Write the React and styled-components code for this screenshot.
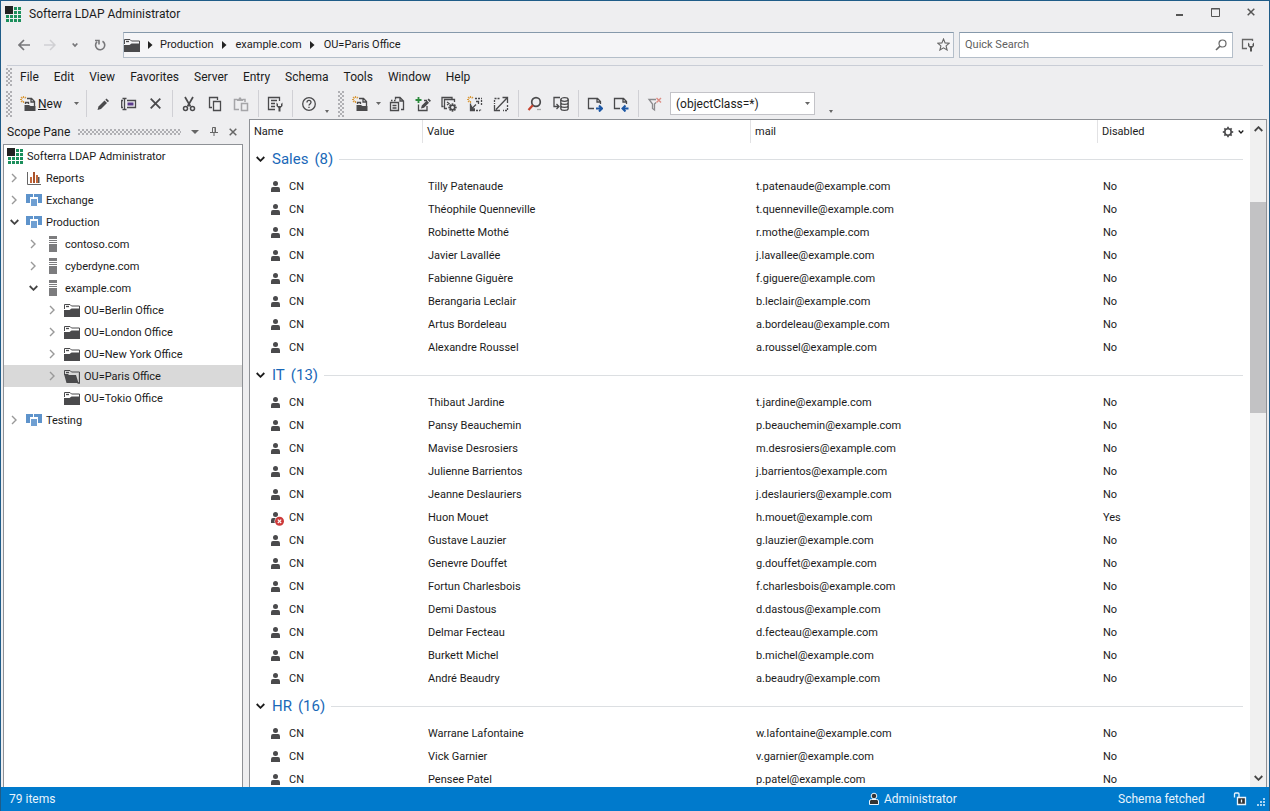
import React from "react";
import styled, { createGlobalStyle, css } from "styled-components";

const listFont = css`
  font-family: Roboto, "Noto Sans", sans-serif;
  font-size: 11px;
`;
const uiFont = css`
  font-family: Roboto, "Noto Sans", sans-serif;
  font-size: 12px;
`;

const Global = createGlobalStyle`
  * { box-sizing: border-box; }
  body { margin: 0; background: #eeeef0; color: #1b1b1b; }
  button { border: 0; padding: 0; background: none; color: inherit; font: inherit; }
  svg { display: block; flex: none; }
`;

const dots = css`
  background-image: radial-gradient(circle at 1px 1px, #b0b0b4 0 1px, transparent 1px),
    radial-gradient(circle at 3px 3px, #b0b0b4 0 1px, transparent 1px);
  background-size: 4px 4px;
`;

const Window = styled.div`
  ${uiFont}
  display: flex;
  flex-direction: column;
  height: 100vh;
  overflow: hidden;
  border: 1px solid #1f5c88;
  border-bottom: 0;
`;
const TitleBar = styled.header`
  display: flex;
  align-items: center;
  height: 26px;
  flex: none;
  padding-left: 4px;
`;
const Title = styled.h1`
  margin: 0 auto 0 8px;
  font-size: 12px;
  font-weight: 400;
`;
const WindowButton = styled.button`
  display: grid;
  place-items: center;
  width: 36px;
  height: 22px;
  margin-bottom: 4px;
  color: #555;
`;
const NavBar = styled.div`
  display: flex;
  align-items: center;
  flex: none;
  height: 39px;
  margin: 0 6px;
  padding: 0 0 3px 4px;
  border-bottom: 1px solid #c9cdd6;
`;
const NavButton = styled.button`
  display: grid;
  place-items: center;
  width: ${(p) => (p.$narrow ? 24 : 26)}px;
  height: 26px;
  color: ${(p) => (p.$dim ? "#d0d0d3" : "#77777a")};
`;
const AddressBar = styled.nav`
  ${listFont}
  display: flex;
  align-items: center;
  flex: 1;
  height: 26px;
  margin: 0 5px 0 10px;
  border: 1px solid #b4bec9;
  border-top-color: #8699ab;
  background: #f5f5f7;
`;
const Crumb = styled.a`
  color: #1b1b1b;
  text-decoration: none;
  white-space: nowrap;
`;
const CrumbArrow = styled.span`
  display: grid;
  place-items: center;
  width: ${(p) => (p.$first ? 20 : 22)}px;
`;
const FavoriteButton = styled.button`
  margin-left: auto;
  padding-right: 3px;
`;
const SearchBox = styled.div`
  display: flex;
  align-items: center;
  width: 274px;
  height: 26px;
  border: 1px solid #b4bec9;
  border-top-color: #8699ab;
  background: #fff;
  padding: 0 5px;
`;
const SearchInput = styled.input`
  ${listFont}
  flex: 1;
  min-width: 0;
  padding: 0;
  border: 0;
  outline: 0;
  background: none;
  &::placeholder { color: #606060; opacity: 1; }
`;
const SearchOptions = styled.button`
  padding: 0 8px;
`;
const MenuBar = styled.nav`
  display: flex;
  align-items: center;
  flex: none;
  height: 22px;
  padding-left: 5px;
`;
const MenuList = styled.div`
  display: flex;
  gap: 15px;
  margin-left: 8px;
`;
const Grip = styled.span`
  ${dots}
  flex: none;
  width: 6px;
  height: ${(p) => p.$h}px;
  margin-right: ${(p) => p.$gap || 0}px;
`;
const Toolbar = styled.div`
  display: flex;
  align-items: center;
  flex: none;
  height: 31px;
  padding-left: 5px;
`;
const ToolButton = styled.button`
  display: grid;
  place-items: center;
  flex: none;
  width: 26px;
  height: 26px;
`;
const NewButton = styled.button`
  display: flex;
  align-items: center;
  gap: 2px;
  flex: none;
  width: 54px;
  height: 26px;
  margin-left: 5px;
  padding-left: 3px;
`;
const DropButton = styled.button`
  display: grid;
  place-items: center;
  flex: none;
  width: 11px;
  height: 26px;
`;
const Overflow = styled.button`
  display: grid;
  place-items: end center;
  flex: none;
  width: 10px;
  height: 16px;
  margin: 2px 6px 0 0;
`;
const Separator = styled.span`
  flex: none;
  width: 1px;
  height: 27px;
  margin: 0 3px 0 4px;
  background: #d0d0d5;
`;
const FilterBox = styled.div`
  display: grid;
  align-items: center;
  width: 145px;
  height: 23px;
  margin: 0 11px 0 2px;
  background: #fff;
  border: 1px solid #c3c3c8;
  & > * { grid-area: 1 / 1; }
  & > svg { justify-self: end; margin-right: 4px; pointer-events: none; }
`;
const FilterSelect = styled.select`
  ${uiFont}
  appearance: none;
  width: 100%;
  height: 100%;
  padding: 0 0 0 5px;
  border: 0;
  background: none;
  color: #1b1b1b;
`;
const Main = styled.main`
  display: flex;
  flex: 1;
  min-height: 0;
  padding: 0 2px;
`;
const ScopePane = styled.aside`
  display: flex;
  flex-direction: column;
  width: 240px;
  flex: none;
  margin-right: 6px;
`;
const PaneHeader = styled.div`
  display: flex;
  align-items: center;
  height: 25px;
  flex: none;
  padding: 0 1px 0 4px;
`;
const PaneTitle = styled.h2`
  margin: 0;
  font-size: 12px;
  font-weight: 400;
`;
const PaneDots = styled.span`
  ${dots}
  flex: 1;
  height: 6px;
  margin: 0 4px 0 8px;
`;
const PaneButton = styled.button`
  display: grid;
  place-items: center;
  width: 19px;
  height: 19px;
  color: #666;
`;
const Tree = styled.ul`
  ${listFont}
  flex: 1;
  margin: 0;
  padding: 0;
  list-style: none;
  background: #fff;
  border: 1px solid #8e9196;
  border-bottom: 0;
`;
const TreeRow = styled.li`
  display: flex;
  align-items: center;
  height: 22px;
  padding-left: ${(p) => (p.$level ? (p.$level - 1) * 19 : 3)}px;
  background: ${(p) => (p.$selected ? "#d9d9d9" : "none")};
  white-space: nowrap;
`;
const Twisty = styled.span`
  display: grid;
  place-items: center;
  width: 20px;
  margin-right: 2px;
  color: ${(p) => (p.$open ? "#444" : "#999")};
`;
const TreeLabel = styled.span`
  margin-left: 4px;
`;
const ListPane = styled.section`
  display: flex;
  flex: 1;
  min-width: 0;
  overflow: hidden;
  border: 1px solid #8e9196;
  border-bottom: 0;
  background: #fff;
`;
const TableArea = styled.div`
  flex: 1;
  min-width: 0;
  overflow: hidden;
`;
const Table = styled.table`
  ${listFont}
  width: 100%;
  table-layout: fixed;
  border-collapse: separate;
  border-spacing: 0;
`;
const HeadCell = styled.th`
  width: ${(p) => p.$w};
  height: 23px;
  padding: 0 0 0 4px;
  font-weight: 400;
  text-align: left;
  border-right: ${(p) => (p.$last ? "0" : "1px solid #e2e2e4")};
`;
const HeadFlex = styled.div`
  display: flex;
  align-items: center;
  justify-content: space-between;
  padding-right: 6px;
`;
const GearButton = styled.button`
  display: flex;
  align-items: center;
  gap: 4px;
`;
const GroupCell = styled.th`
  height: 32px;
  padding: 0 7px 0 6px;
  font-weight: 400;
`;
const GroupFlex = styled.div`
  display: flex;
  align-items: center;
  &::after {
    content: "";
    flex: 1;
    height: 1px;
    margin-left: 6px;
    background: #dcdfe2;
  }
`;
const GroupTitle = styled.span`
  display: flex;
  gap: 6px;
  margin-left: 7px;
  font-size: 15px;
  line-height: 20px;
  color: #1a68b8;
`;
const Cell = styled.td`
  height: 23px;
  padding: 0 0 0 ${(p) => (p.$name ? 19 : 5)}px;
  white-space: nowrap;
`;
const NameFlex = styled.div`
  display: flex;
  align-items: center;
  gap: 4px;
`;
const ScrollBar = styled.div`
  display: flex;
  flex-direction: column;
  width: 16px;
  flex: none;
  background: #f0f0f0;
`;
const ScrollButton = styled.button`
  display: grid;
  place-items: center;
  height: 18px;
  color: #444;
`;
const ScrollTrack = styled.div`
  flex: 1;
  display: grid;
  grid-template-rows: 64fr 211fr 356fr;
`;
const ScrollThumb = styled.div`
  grid-row: 2;
  background: #c2c2c4;
`;
const StatusBar = styled.footer`
  display: flex;
  align-items: center;
  flex: none;
  height: 24px;
  margin: 0 -1px;
  padding: 0 5px 0 9px;
  background: #007acc;
  color: #e8f4fd;
`;
const StatusItem = styled.span`
  display: flex;
  align-items: center;
  gap: 4px;
  width: ${(p) => p.$w}px;
`;
const StatusCount = styled.span`
  margin-right: auto;
`;
const StatusGrip = styled.span`
  margin: 6px 0 0 10px;
`;

const Svg = ({ w = 16, h = 16, children, ...rest }) => (
  <svg width={w} height={h} viewBox={`0 0 ${w} ${h}`} fill="none" stroke="#4a4a4c" strokeWidth="1.3" aria-hidden="true" {...rest}>
    {children}
  </svg>
);

const Logo = () => (
  <Svg stroke="none">
    {[0, 1, 2, 3].map((r) =>
      [0, 1, 2, 3].map((c) =>
        r < 2 && c < 2 ? null : <rect key={`${r}${c}`} x={c * 4 + 1} y={r * 4 + 1} width="3" height="3" fill="#1c8f5c" />
      )
    )}
    <path d="M0 0h8v8H0z" fill="#222" />
  </Svg>
);
const Folder = ({ open }) => (
  <Svg stroke="none">
    <path d="M.5 7V2.500H6l1.500 1.500h8V7" stroke="#4a4a4c" strokeWidth="1" />
    <path d="M2 4.500h3" stroke="#4a4a4c" />
    {open ? (
      <>
        <path d="M0 6h4l1 1h7l2.500 8H2.500z" fill="#4a4a4c" />
        <path d="M15.500 5v10h-2" stroke="#4a4a4c" />
      </>
    ) : (
      <path d="M0 8h5.500l2-1.500H16V15H0z" fill="#4a4a4c" />
    )}
  </Svg>
);
const Report = () => (
  <Svg stroke="none">
    <path d="M1.500 2v12.500H15" stroke="#666" strokeWidth="1" />
    <path d="M4 7h2v6H4zM10 5h2v8h-2z" fill="#c4683a" />
    <path d="M7 2h2v11H7z" fill="#a8522c" />
    <path d="M12 7h1.500v6H12z" fill="#555" />
  </Svg>
);
const Realm = () => (
  <Svg stroke="none">
    <path d="M0 2h7v3H4v6H0zM8 2h8v9h-4V5H8z" fill="#5e93cb" />
    <path d="M4.500 6.500h7v8h-7z" fill="#6f9fd2" stroke="#fff" strokeWidth="1" />
  </Svg>
);
const Server = () => (
  <Svg stroke="none">
    <path d="M4 0h8v3H4zM4 4h8v1H4zM4 6h8v1H4zM4 8h8v8H4z" fill="#7c7c7e" />
  </Svg>
);
const Person = ({ disabled }) => (
  <Svg stroke="none">
    <circle cx="6.500" cy="4.500" r="2.500" fill="#4a4a4c" />
    <path d="M2 13v-2.800Q2 8 4 8h5q2 0 2 2.200V13z" fill="#4a4a4c" />
    {disabled && (
      <>
        <circle cx="10.500" cy="11.300" r="5" fill="#fff" />
        <circle cx="10.500" cy="11.300" r="4.500" fill="#cc3a3a" />
        <path d="M8.800 9.600l3.400 3.400m0-3.400l-3.400 3.400" stroke="#fff" strokeWidth="1.200" />
      </>
    )}
  </Svg>
);
const Caret = ({ w = 5 }) => (
  <Svg w={w} h={3} stroke="none"><path d={`M0 0h${w}l-${w / 2} 3z`} fill="#666" /></Svg>
);
const ChevDown = ({ w = 9, sw = 1.8 }) => (
  <Svg w={w} h={6} stroke="currentColor" strokeWidth={sw}>
    <path d={w > 6 ? "M.7 1l3.800 3.800L8.300 1" : "M.7 1.500L3 4l2.300-2.500"} />
  </Svg>
);
const ChevRight = () => (
  <Svg w={6} h={10} stroke="currentColor" strokeWidth="1.400"><path d="M1 1l4 4-4 4" /></Svg>
);
const Play = () => (
  <Svg w={5} h={8} stroke="none"><path d="M0 0l4.500 4L0 8z" fill="#222" /></Svg>
);
const Cross = ({ s = 9, sw = 1.5, c = "currentColor" }) => (
  <Svg w={s} h={s} stroke={c} strokeWidth={sw}><path d={`M.7 .7L${s - 0.7} ${s - 0.7}M${s - 0.7} .7L.7 ${s - 0.7}`} /></Svg>
);
const Spark = () => <path d="M3.500 0v2M3.500 5v2M0 3.500h2M1 1l1.500 1.500M6 1L4.700 2.300M1 6l1.500-1.500" stroke="#d99a3d" strokeWidth="1.200" />;
const NewEntry = () => (
  <Svg>
    <Spark />
    <path d="M7 2.500h4.500l3 3V10M11 2.500V6h3.500M5.500 8V6.500h3V8" />
    <path d="M4.500 9h4.500l1.500 1H15.500v5h-11z" fill="#4a4a4c" stroke="none" />
  </Svg>
);
const Pencil = () => (
  <Svg stroke="none">
    <path d="M2.500 14l1-3.500 6-6 2.500 2.500-6 6z" fill="#4a4a4c" />
    <path d="M10.300 3.700l1.200-1.200L14 5l-1.200 1.200z" fill="#4a4a4c" />
  </Svg>
);
const Rename = () => (
  <Svg>
    <path d="M1.500 2.500h4M3.500 2.500v11M1.500 13.500h4M6 4.500h8.500v7H6" />
    <path d="M6.500 6.500h6v3h-6z" fill="#5a3a8c" stroke="none" />
    <path d="M2 4.500H.7v7H2" />
  </Svg>
);
const Cut = () => (
  <Svg>
    <path d="M4 1l5.500 9.500M12 1L6.500 10.500" strokeWidth="1.700" />
    <circle cx="4.500" cy="12.500" r="2" strokeWidth="1.500" />
    <circle cx="11.500" cy="12.500" r="2" strokeWidth="1.500" />
  </Svg>
);
const Copy = () => (
  <Svg><path d="M5 11.500H2.500v-10h8V4M6.500 5.500h7v9h-7z" /></Svg>
);
const Paste = () => (
  <Svg stroke="#a5a5a8">
    <path d="M6 13.500H1.500V3.500h3M9.500 3.500H12V6M8.500 7.500h6v7h-6z" strokeWidth="1.500" />
    <path d="M4 5V3h1.500l.5-1.500h2L8.500 3H10v2z" fill="#a5a5a8" stroke="none" />
  </Svg>
);
const WrenchMark = ({ x = 0, y = 0, c = "#4a4a4c" }) => (
  <path transform={`translate(${x} ${y})`} d="M0 0v3.500l2 2V9h2V5.500l2-2V0L4.500 1.500v2h-3v-2z" fill={c} stroke="none" />
);
const Properties = () => (
  <Svg>
    <path d="M8 13.500H1.500v-12h11V5M4 4.500h6M4 7.500h4M4 10.500h4" />
    <WrenchMark x={9.5} y={6.5} />
  </Svg>
);
const Help = () => (
  <Svg>
    <circle cx="8" cy="8" r="6.300" />
    <path d="M6 6.500c0-2.800 4-2.600 4-.2C10 8 8 7.800 8 9.600M8 10.700v1.400" />
  </Svg>
);
const NewLdif = () => (
  <Svg>
    <path d="M6.500 3.500v-2H11l3.500 3.500v8.500H12M11 1.500V5h3.500" />
    <path d="M1.500 6.500h8v8h-8zM3.500 9.500h4M3.500 12h4M2 4.500h1.500M5 4.500h1.500" />
  </Svg>
);
const AddEdit = () => (
  <Svg>
    <path d="M3.500 8.500v6H12V10M9 4.500h3" />
    <path d="M3.500 1v6M.5 4h6" stroke="#2c8a3c" strokeWidth="1.800" />
    <path d="M6 12.500l.8-3 5-5 2.200 2.200-5 5zM12.500 3.800l1.200-1.200L16 4.800 14.700 6z" fill="#4a4a4c" stroke="none" />
  </Svg>
);
const GearMark = ({ x, y, r }) => (
  <>
    <circle cx={x} cy={y} r={r} strokeWidth="1.600" />
    {[0, 45, 90, 135, 180, 225, 270, 315].map((a) => (
      <path key={a} d={`M${x} ${y - r}v-2`} strokeWidth="1.700" transform={`rotate(${a} ${x} ${y})`} />
    ))}
  </>
);
const BatchGear = () => (
  <Svg>
    <path d="M2.500 10.500H1v-9h10V3M6 12.500H3.500v-9h10V6M6 6l2 1.500L6 9" />
    <GearMark x={11.5} y={11.5} r={2.2} />
  </Svg>
);
const ImportBox = () => (
  <Svg>
    <path d="M8 2.500h7M14.500 4v6M13.500 13.500v1M9 14.500h4" strokeDasharray="2 1" />
    <path d="M3.500 7.500v7H8M4.500 9.500V13H8M5 12.500l4-4M9 5.500h2.500V8" />
    <Spark />
  </Svg>
);
const ExportBox = () => (
  <Svg>
    <path d="M1.500 2.500h5M1.500 4v4M14.500 9v5.500H10" strokeDasharray="2 1" />
    <path d="M9.500 1.500h5V7M14 2L3 13.500M1.500 9v5.500H7" />
  </Svg>
);
const Find = () => (
  <Svg>
    <circle cx="9" cy="6" r="4.300" strokeWidth="1.700" />
    <path d="M5.800 9.200L1.500 14" stroke="#c8432e" strokeWidth="2.200" />
    <path d="M10 13.500h4" stroke="#aaa" />
  </Svg>
);
const DbImport = () => (
  <Svg>
    <path d="M7 1.500H1v9h5M3.500 8L6 10.500 3.500 13" />
    <ellipse cx="11.500" cy="3.500" rx="3.700" ry="1.800" />
    <path d="M7.800 3.500v9c0 2.500 7.400 2.500 7.400 0v-9M7.800 6.500c0 2.500 7.400 2.500 7.400 0M7.800 9.500c0 2.500 7.400 2.500 7.400 0" />
  </Svg>
);
const PageArrow = ({ left }) => (
  <Svg>
    <path d="M7 12.500H1.500v-10h9l3 3V8M10 2.500V6h3.500" />
    {left ? (
      <path d="M15.500 12.500H10M12.500 9.500l-3 3 3 3" stroke="#1c57a5" strokeWidth="2" />
    ) : (
      <path d="M9 12.500h5.500M12 9.500l3 3-3 3" stroke="#1c57a5" strokeWidth="2" />
    )}
  </Svg>
);
const Funnel = () => (
  <Svg stroke="#8a8a8d">
    <path d="M9 3.500H2L5.500 8v4.500l2 1.500V8L9 6.500" />
    <path d="M9.500 2L14 6.500M14 2L9.500 6.500" stroke="#dc8c84" strokeWidth="1.400" />
  </Svg>
);
const Gear = () => (
  <Svg w={12} h={12}><GearMark x={6} y={6} r={3.2} /></Svg>
);
const Star = () => (
  <Svg w={13} h={13} stroke="#666" strokeWidth="1.100"><path d="M6.500 1l1.600 3.900 4.200.3-3.200 2.700 1 4.100-3.600-2.200L2.900 12l1-4.100L.7 5.200l4.200-.3z" /></Svg>
);
const Magnifier = () => (
  <Svg w={12} h={12} stroke="#666" strokeWidth="1.200"><circle cx="7.500" cy="4.500" r="3.500" /><path d="M5 7.200L1 11" strokeWidth="1.600" /></Svg>
);
const Tune = () => (
  <Svg w={14} h={16} stroke="#666"><path d="M6 11.500H1.500v-9h10V4" /><WrenchMark x={7} y={5.5} c="#555" /></Svg>
);

const menus = ["File", "Edit", "View", "Favorites", "Server", "Entry", "Schema", "Tools", "Window", "Help"];

const tree = [
  { label: "Softerra LDAP Administrator", level: 0, icon: <Logo /> },
  { label: "Reports", level: 1, icon: <Report />, state: "closed" },
  { label: "Exchange", level: 1, icon: <Realm />, state: "closed" },
  { label: "Production", level: 1, icon: <Realm />, state: "open" },
  { label: "contoso.com", level: 2, icon: <Server />, state: "closed" },
  { label: "cyberdyne.com", level: 2, icon: <Server />, state: "closed" },
  { label: "example.com", level: 2, icon: <Server />, state: "open" },
  { label: "OU=Berlin Office", level: 3, icon: <Folder />, state: "closed" },
  { label: "OU=London Office", level: 3, icon: <Folder />, state: "closed" },
  { label: "OU=New York Office", level: 3, icon: <Folder />, state: "closed" },
  { label: "OU=Paris Office", level: 3, icon: <Folder open />, state: "closed", selected: true },
  { label: "OU=Tokio Office", level: 3, icon: <Folder />, state: "leaf" },
  { label: "Testing", level: 1, icon: <Realm />, state: "closed" },
];

const groups = [
  {
    title: "Sales",
    count: 8,
    rows: [
      ["Tilly Patenaude", "t.patenaude"],
      ["Théophile Quenneville", "t.quenneville"],
      ["Robinette Mothé", "r.mothe"],
      ["Javier Lavallée", "j.lavallee"],
      ["Fabienne Giguère", "f.giguere"],
      ["Berangaria Leclair", "b.leclair"],
      ["Artus Bordeleau", "a.bordeleau"],
      ["Alexandre Roussel", "a.roussel"],
    ],
  },
  {
    title: "IT",
    count: 13,
    rows: [
      ["Thibaut Jardine", "t.jardine"],
      ["Pansy Beauchemin", "p.beauchemin"],
      ["Mavise Desrosiers", "m.desrosiers"],
      ["Julienne Barrientos", "j.barrientos"],
      ["Jeanne Deslauriers", "j.deslauriers"],
      ["Huon Mouet", "h.mouet", true],
      ["Gustave Lauzier", "g.lauzier"],
      ["Genevre Douffet", "g.douffet"],
      ["Fortun Charlesbois", "f.charlesbois"],
      ["Demi Dastous", "d.dastous"],
      ["Delmar Fecteau", "d.fecteau"],
      ["Burkett Michel", "b.michel"],
      ["André Beaudry", "a.beaudry"],
    ],
  },
  {
    title: "HR",
    count: 16,
    rows: [
      ["Warrane Lafontaine", "w.lafontaine"],
      ["Vick Garnier", "v.garnier"],
      ["Pensee Patel", "p.patel"],
    ],
  },
];

const Tool = ({ label, children }) => (
  <ToolButton type="button" aria-label={label}>{children}</ToolButton>
);

export default function App() {
  return (
    <>
      <Global />
      <Window>
        <TitleBar>
          <Logo />
          <Title>Softerra LDAP Administrator</Title>
          <WindowButton type="button" aria-label="Minimize"><Svg w={7} h={8} stroke="currentColor" strokeWidth="2"><path d="M0 7h7" /></Svg></WindowButton>
          <WindowButton type="button" aria-label="Maximize"><Svg w={9} h={9} stroke="currentColor" strokeWidth="1"><path d="M.5.5h8v8h-8zM0 1h9" /></Svg></WindowButton>
          <WindowButton type="button" aria-label="Close"><Cross s={8} /></WindowButton>
        </TitleBar>
        <NavBar>
          <NavButton type="button" aria-label="Back"><Svg w={12} h={12} stroke="currentColor" strokeWidth="1.700"><path d="M12 6H1M6 1L1 6l5 5" /></Svg></NavButton>
          <NavButton type="button" aria-label="Forward" $dim><Svg w={12} h={12} stroke="currentColor" strokeWidth="1.500"><path d="M0 6h11M6 1l5 5-5 5" /></Svg></NavButton>
          <NavButton type="button" aria-label="History" $narrow><ChevDown w={6} /></NavButton>
          <NavButton type="button" aria-label="Refresh"><Svg w={12} h={12} stroke="currentColor" strokeWidth="1.600"><path d="M8.500 2.200A4.600 4.600 0 1 1 3 2.800M5 5.500V1.500H1" /></Svg></NavButton>
          <AddressBar aria-label="Location">
            <Folder />
            <CrumbArrow $first><Play /></CrumbArrow>
            <Crumb href="#production">Production</Crumb>
            <CrumbArrow><Play /></CrumbArrow>
            <Crumb href="#example">example.com</Crumb>
            <CrumbArrow><Play /></CrumbArrow>
            <Crumb href="#paris">OU=Paris Office</Crumb>
            <FavoriteButton type="button" aria-label="Add to favorites"><Star /></FavoriteButton>
          </AddressBar>
          <SearchBox>
            <SearchInput type="search" placeholder="Quick Search" aria-label="Quick Search" />
            <Magnifier />
          </SearchBox>
          <SearchOptions type="button" aria-label="Search options"><Tune /></SearchOptions>
        </NavBar>
        <MenuBar aria-label="Main menu">
          <Grip $h={18} />
          <MenuList>
            {menus.map((m) => <button type="button" key={m}>{m}</button>)}
          </MenuList>
        </MenuBar>
        <Toolbar role="toolbar" aria-label="Standard">
          <Grip $h={26} />
          <NewButton type="button"><NewEntry /><span><u>N</u>ew</span></NewButton>
          <DropButton type="button" aria-label="New options"><Caret /></DropButton>
          <Separator />
          <Tool label="Edit"><Pencil /></Tool>
          <Tool label="Rename"><Rename /></Tool>
          <Tool label="Delete"><Cross s={11} sw={1.8} c="#4a4a4c" /></Tool>
          <Separator />
          <Tool label="Cut"><Cut /></Tool>
          <Tool label="Copy"><Copy /></Tool>
          <Tool label="Paste"><Paste /></Tool>
          <Separator />
          <Tool label="Properties"><Properties /></Tool>
          <Separator />
          <Tool label="Help"><Help /></Tool>
          <Overflow type="button" aria-label="More standard buttons"><Caret w={4} /></Overflow>
          <Grip $h={26} $gap={3} />
          <Tool label="New entry"><NewEntry /></Tool>
          <DropButton type="button" aria-label="New entry options"><Caret /></DropButton>
          <Tool label="New LDIF"><NewLdif /></Tool>
          <Tool label="Add value"><AddEdit /></Tool>
          <Tool label="Batch update"><BatchGear /></Tool>
          <Tool label="Import"><ImportBox /></Tool>
          <Tool label="Export"><ExportBox /></Tool>
          <Separator />
          <Tool label="Search"><Find /></Tool>
          <Tool label="Save to server"><DbImport /></Tool>
          <Separator />
          <Tool label="Next page"><PageArrow /></Tool>
          <Tool label="Previous page"><PageArrow left /></Tool>
          <Separator />
          <Tool label="Clear filter"><Funnel /></Tool>
          <FilterBox>
            <FilterSelect aria-label="Filter" defaultValue="all">
              <option value="all">(objectClass=*)</option>
            </FilterSelect>
            <Caret />
          </FilterBox>
          <Overflow type="button" aria-label="More filter buttons"><Caret w={4} /></Overflow>
        </Toolbar>
        <Main>
          <ScopePane>
            <PaneHeader>
              <PaneTitle>Scope Pane</PaneTitle>
              <PaneDots />
              <PaneButton type="button" aria-label="Pane menu"><Svg w={8} h={4} stroke="none"><path d="M0 0h8L4 4z" fill="#666" /></Svg></PaneButton>
              <PaneButton type="button" aria-label="Pin"><Svg w={8} h={9} stroke="currentColor" strokeWidth="1"><path d="M2.500 5V.5h3V5M5 .5V5M0 5.500h8M4 6v3" /></Svg></PaneButton>
              <PaneButton type="button" aria-label="Close pane"><Cross s={8} /></PaneButton>
            </PaneHeader>
            <Tree>
              {tree.map((n) => (
                <TreeRow key={n.label} $level={n.level} $selected={n.selected}>
                  {n.level > 0 && (
                    <Twisty $open={n.state === "open"}>
                      {n.state === "open" && <ChevDown />}
                      {n.state === "closed" && <ChevRight />}
                    </Twisty>
                  )}
                  {n.icon}
                  <TreeLabel>{n.label}</TreeLabel>
                </TreeRow>
              ))}
            </Tree>
          </ScopePane>
          <ListPane>
            <TableArea>
              <Table>
                <thead>
                  <tr>
                    <HeadCell scope="col" $w="17.3%">Name</HeadCell>
                    <HeadCell scope="col" $w="32.8%">Value</HeadCell>
                    <HeadCell scope="col" $w="34.7%">mail</HeadCell>
                    <HeadCell scope="col" $w="15.2%" $last>
                      <HeadFlex>
                        Disabled
                        <GearButton type="button" aria-label="Columns"><Gear /><ChevDown w={6} sw={1.2} /></GearButton>
                      </HeadFlex>
                    </HeadCell>
                  </tr>
                </thead>
                {groups.map((g) => (
                  <tbody key={g.title}>
                    <tr>
                      <GroupCell colSpan={4} scope="rowgroup">
                        <GroupFlex>
                          <ChevDown />
                          <GroupTitle><span>{g.title}</span><span>({g.count})</span></GroupTitle>
                        </GroupFlex>
                      </GroupCell>
                    </tr>
                    {g.rows.map(([name, mail, disabled]) => (
                      <tr key={mail}>
                        <Cell $name><NameFlex><Person disabled={disabled} />CN</NameFlex></Cell>
                        <Cell>{name}</Cell>
                        <Cell>{mail}@example.com</Cell>
                        <Cell>{disabled ? "Yes" : "No"}</Cell>
                      </tr>
                    ))}
                  </tbody>
                ))}
              </Table>
            </TableArea>
            <ScrollBar>
              <ScrollButton type="button" aria-label="Scroll up"><Svg w={9} h={6} stroke="currentColor" strokeWidth="1.800"><path d="M.7 5l3.800-3.800L8.300 5" /></Svg></ScrollButton>
              <ScrollTrack><ScrollThumb /></ScrollTrack>
              <ScrollButton type="button" aria-label="Scroll down"><ChevDown /></ScrollButton>
            </ScrollBar>
          </ListPane>
        </Main>
        <StatusBar>
          <StatusCount>79 items</StatusCount>
          <StatusItem $w={250}>
            <Svg w={12} h={14} stroke="#e8f4fd" strokeWidth="1"><circle cx="6" cy="4" r="2.800" fill="#333" /><path d="M1.500 12.500V9q0-1.500 2-1.500h5q2 0 2 1.500v3.500z" fill="#333" /></Svg>
            Administrator
          </StatusItem>
          <StatusItem $w={115}>Schema fetched</StatusItem>
          <Svg w={14} h={14} stroke="#e8f4fd"><path d="M1.500 5.500V2q0-1 1-1h2.500q1 0 1 1v3" /><path d="M4.500 5.500h8v7h-8z" fill="#333" /><path d="M8.500 7.500v3" /></Svg>
          <StatusGrip><Svg w={8} h={8} stroke="none"><path d="M6 0h2v2H6zM3 3h2v2H3zM6 3h2v2H6zM0 6h2v2H0zM3 6h2v2H3zM6 6h2v2H6z" fill="#a8d4f2" /></Svg></StatusGrip>
        </StatusBar>
      </Window>
    </>
  );
}
